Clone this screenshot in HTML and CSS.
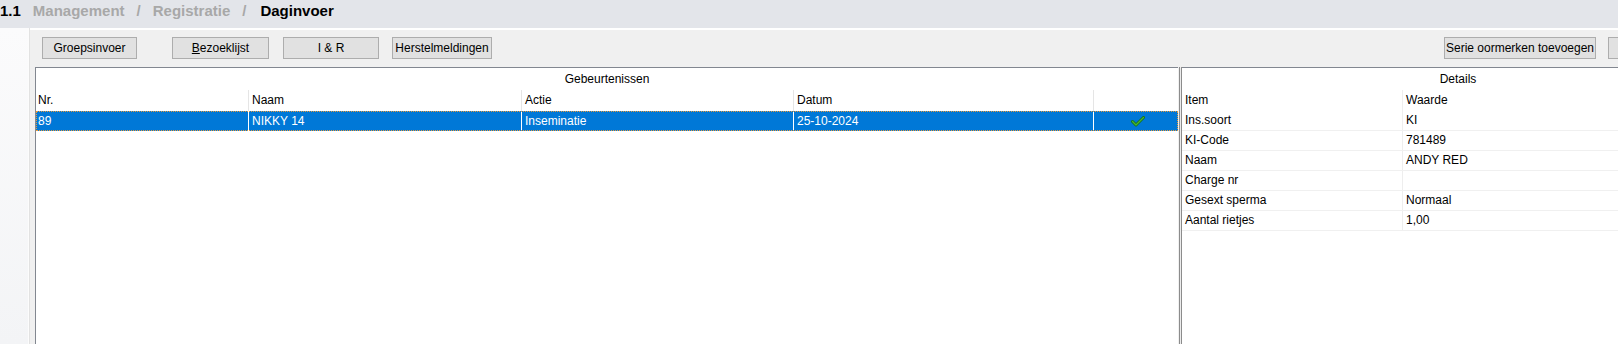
FILE: index.html
```html
<!DOCTYPE html>
<html lang="nl">
  <head>
    <meta charset="UTF-8" />
    <title>Daginvoer</title>
    <link rel="stylesheet" href="styles.css">
  </head>
  <body>
    <div class="crumbbar">
      <span class="num">1.1</span>
      <span class="crumb">Management</span>
      <span class="sep">/</span>
      <span class="crumb">Registratie</span>
      <span class="sep">/</span>
      <span class="current">Daginvoer</span>
    </div>
    <div class="main">
      <div class="sidebar"></div>
      <div class="workspace">
        <div class="toolbar">
          <button class="btn btnGroep">Groepsinvoer</button>
          <button class="btn btnBezoek"><u>B</u>ezoeklijst</button>
          <button class="btn btnIR">I &amp; R</button>
          <button class="btn btnHerstel">Herstelmeldingen</button>
          <button class="btn btnSerie">Serie oormerken toevoegen</button>
          <button class="btn btnExtra">&nbsp;</button>
        </div>
        <div class="panes">
          <div class="pane events">
            <div class="paneTitle">Gebeurtenissen</div>
            <div class="row head">
              <div class="cell cNr">Nr.</div>
              <div class="cell cNaam">Naam</div>
              <div class="cell cActie">Actie</div>
              <div class="cell cDatum">Datum</div>
              <div class="cell cCheck"></div>
            </div>
            <div class="row selected">
              <div class="cell cNr">89</div>
              <div class="cell cNaam">NIKKY 14</div>
              <div class="cell cActie">Inseminatie</div>
              <div class="cell cDatum">25-10-2024</div>
              <div class="cell cCheck">
                <svg width="14" height="11" viewBox="0 0 14 11">
                  <path d="M1.5 5.5 L5 9 L12.5 1.5" fill="none" stroke="#16701a" stroke-width="3" stroke-linecap="round" stroke-linejoin="round" />
                  <path d="M1.5 5.5 L5 9 L12.5 1.5" fill="none" stroke="#45b52e" stroke-width="1.4" stroke-linecap="round" stroke-linejoin="round" />
                </svg>
              </div>
            </div>
          </div>
          <div class="splitter"></div>
          <div class="pane details">
            <div class="paneTitle">Details</div>
            <div class="row head">
              <div class="cell cItem">Item</div>
              <div class="cell cWaarde">Waarde</div>
            </div>
            <div class="row prop">
              <div class="cell cItem">Ins.soort</div>
              <div class="cell cWaarde">KI</div>
            </div>
            <div class="row prop">
              <div class="cell cItem">KI-Code</div>
              <div class="cell cWaarde">781489</div>
            </div>
            <div class="row prop">
              <div class="cell cItem">Naam</div>
              <div class="cell cWaarde">ANDY RED</div>
            </div>
            <div class="row prop">
              <div class="cell cItem">Charge nr</div>
              <div class="cell cWaarde"></div>
            </div>
            <div class="row prop">
              <div class="cell cItem">Gesext sperma</div>
              <div class="cell cWaarde">Normaal</div>
            </div>
            <div class="row prop">
              <div class="cell cItem">Aantal rietjes</div>
              <div class="cell cWaarde">1,00</div>
            </div>
          </div>
        </div>
      </div>
    </div>
  </body>
</html>
```

FILE: styles.css
```css
body {
  margin: 0;
  font-family: "Liberation Sans", Arial, sans-serif;
  font-size: 12px;
  color: #000;
  overflow: hidden;
  height: 344px;
  background-color: #f0f0f0;
}
.crumbbar {
  height: 28px;
  box-sizing: border-box;
  line-height: 21px;
  background-color: #e3e5ea;
  font-size: 15px;
  font-weight: bold;
  color: #a8a8a8;
  white-space: nowrap;
  display: flex;
}
.num {
  color: #000;
  margin-right: 12px;
}
.sep {
  margin: 0 12px;
}
.current {
  color: #000;
  margin-left: 2px;
}
.main {
  display: flex;
  height: 316px;
  overflow: hidden;
}
.sidebar {
  width: 28px;
  flex-shrink: 0;
  background: linear-gradient(to bottom, #fbfbfc, #f3f4f6);
  border-right: 1px solid #fcfcfc;
}
.workspace {
  width: 1705px;
  flex-shrink: 0;
  background-color: #f0f0f0;
  border-left: 1px solid #e2e2e2;
  display: flex;
  flex-direction: column;
}
.toolbar {
  display: flex;
  align-items: flex-start;
  border-top: 2px solid #ffffff;
  padding: 7px 0 8px 12px;
}
.btn {
  height: 22px;
  box-sizing: border-box;
  font-family: "Liberation Sans", Arial, sans-serif;
  font-size: 12px;
  color: #000;
  background-color: #e1e1e1;
  border: 1px solid #adadad;
  border-radius: 0;
  padding: 0;
  margin: 0;
  white-space: nowrap;
}
.btnGroep {
  width: 95px;
}
.btnBezoek {
  width: 97px;
  margin-left: 35px;
}
.btnIR {
  width: 96px;
  margin-left: 14px;
}
.btnHerstel {
  width: 100px;
  margin-left: 13px;
}
.btnSerie {
  width: 152px;
  margin-left: auto;
}
.btnExtra {
  width: 96px;
  margin-left: 12px;
  margin-right: 31px;
}
.panes {
  flex: 1;
  display: flex;
  margin-left: 5px;
  min-height: 0;
}
.pane {
  background-color: #fff;
  border-top: 1px solid #828790;
}
.events {
  width: 1142px;
  border-left: 1px solid #828790;
}
.splitter {
  width: 1px;
  margin-left: 1px;
  background-color: #ececec;
  border-left: 1px solid #8c8c8c;
  border-right: 1px solid #8c8c8c;
}
.details {
  width: 552px;
  flex-shrink: 0;
}
.paneTitle {
  height: 22px;
  line-height: 22px;
  text-align: center;
}
.row {
  display: flex;
  height: 20px;
  line-height: 20px;
  white-space: nowrap;
  box-sizing: border-box;
}
.row.head {
  height: 21px;
  line-height: 21px;
}
.cell {
  box-sizing: border-box;
  padding-left: 3px;
  overflow: hidden;
}
.cNr {
  width: 212px;
  padding-left: 2px;
}
.cNaam {
  width: 273px;
}
.cActie {
  width: 272px;
}
.cDatum {
  width: 300px;
}
.cCheck {
  flex: 1;
  display: flex;
  align-items: center;
  justify-content: center;
}
.head .cNaam,
.head .cActie,
.head .cDatum,
.head .cCheck {
  border-left: 1px solid #e5e5e5;
}
.selected {
  background-color: #0078d7;
  color: #fff;
  outline: 1px dotted #e89a3c;
  outline-offset: -1px;
}
.selected .cNaam,
.selected .cActie,
.selected .cDatum,
.selected .cCheck {
  border-left: 1px solid #fff;
}
.cItem {
  width: 220px;
}
.cWaarde {
  flex: 1;
}
.head .cWaarde,
.prop .cWaarde {
  border-left: 1px solid #eeeeee;
}
.prop {
  line-height: 19px;
  border-bottom: 1px solid #f0f0f0;
}
```
